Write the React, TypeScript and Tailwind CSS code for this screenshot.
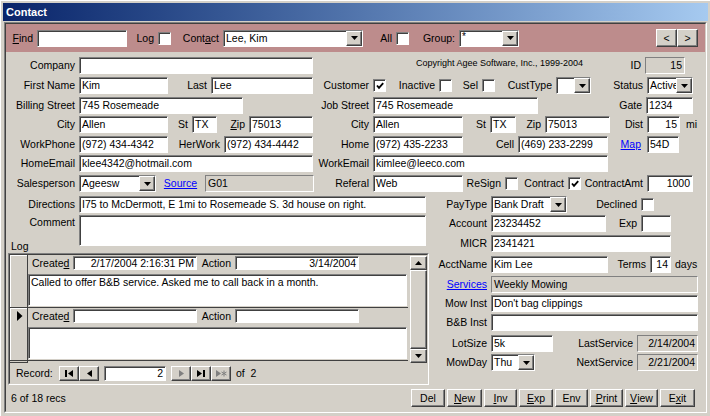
import React from "react";

const sunk =
  "border border-t-[#808080] border-l-[#808080] border-r-white border-b-white shadow-[inset_1px_1px_0_#404040]";
const flat = "border border-t-[#808080] border-l-[#808080] border-r-white border-b-white";
const raised =
  "border border-t-white border-l-white border-r-[#404040] border-b-[#404040] shadow-[inset_-1px_-1px_0_#808080] bg-[#d4d0c8]";

type P = { w: string; children?: React.ReactNode; className?: string };

function Lb({ w, children, className = "" }: P) {
  return <div className={`${w} shrink-0 whitespace-nowrap pr-[4px] text-right ${className}`}>{children}</div>;
}

function Tb({
  w,
  children,
  right,
  grey,
  h = "h-[17px]",
  className = "",
}: P & { right?: boolean; grey?: boolean; h?: string }) {
  return (
    <div
      className={`${w} ${h} flex shrink-0 items-center overflow-hidden whitespace-nowrap pl-[2px] pr-[2px] ${
        grey ? `bg-[#d4d0c8] ${flat}` : `bg-white ${sunk}`
      } ${right ? "justify-end" : ""} ${className}`}
    >
      {children}
    </div>
  );
}

function Down() {
  return (
    <svg width="7" height="4" viewBox="0 0 7 4">
      <path d="M0 0h7L3.5 4z" fill="black" />
    </svg>
  );
}

function Cb({ w, children }: P) {
  return (
    <div className={`${w} flex h-[17px] shrink-0 overflow-hidden bg-white ${sunk}`}>
      <div className="flex flex-1 items-center overflow-hidden whitespace-nowrap pl-[2px]">{children}</div>
      <div className={`flex h-full w-[16px] shrink-0 items-center justify-center ${raised}`}>
        <Down />
      </div>
    </div>
  );
}

function Ck({ on }: { on?: boolean }) {
  return (
    <div className={`flex h-[13px] w-[13px] shrink-0 items-center justify-center bg-white ${sunk}`}>
      {on && (
        <svg width="8" height="8" viewBox="0 0 8 8">
          <path d="M1 3.5 L3 5.8 L7.2 1.2" stroke="black" strokeWidth="1.9" fill="none" />
        </svg>
      )}
    </div>
  );
}

function Btn({ w, children }: P) {
  return <div className={`${w} flex h-[18px] shrink-0 items-center justify-center ${raised}`}>{children}</div>;
}

function Link({ children }: { children: React.ReactNode }) {
  return <span className="text-[#0000ff] underline">{children}</span>;
}

function Row({ children, className = "" }: { children: React.ReactNode; className?: string }) {
  return <div className={`flex h-[17px] items-center ${className}`}>{children}</div>;
}

function Rec({ created, action, memo, current }: { created?: string; action?: string; memo?: string; current?: boolean }) {
  return (
    <div className="flex h-[53px] border-b border-[#404040]">
      <div className="flex w-[18px] shrink-0 justify-center border-r border-[#404040] bg-[#d4d0c8] pt-[3px] pl-[2px] shadow-[inset_1px_1px_0_white]">
        {current && (
          <svg width="6" height="10" viewBox="0 0 6 10">
            <path d="M0 0L5.5 5L0 10z" fill="black" />
          </svg>
        )}
      </div>
      <div className="flex w-[380px] flex-col">
        <div className="mt-[1px] flex h-[14px] items-center">
          <div className="w-[45px] shrink-0 pl-[4px]">
            Create<u>d</u>
          </div>
          <Tb w="w-[124px]" h="h-[14px]" right>
            {created}
          </Tb>
          <Lb w="w-[38px]">Action</Lb>
          <Tb w="w-[124px]" h="h-[14px]" right>
            {action}
          </Tb>
        </div>
        <div className={`mt-[4px] h-[32px] w-[379px] bg-white pl-[2px] pt-[1px] ${sunk}`}>{memo}</div>
      </div>
    </div>
  );
}

function NavBtn({ children }: { children: React.ReactNode }) {
  return <div className={`flex h-[15px] w-[20px] shrink-0 items-center justify-center ${raised}`}>{children}</div>;
}

function SubForm() {
  return (
    <div className="ml-[2px] h-[132px] w-[421px] border border-t-[#808080] border-l-[#808080] border-r-white border-b-white">
      <div className="flex h-full flex-col border border-t-[#404040] border-l-[#404040] border-r-[#d4d0c8] border-b-[#d4d0c8]">
        <div className="flex h-[108px]">
          <div className="flex w-[398px] flex-col">
            <Rec
              created="2/17/2004 2:16:31 PM"
              action="3/14/2004"
              memo="Called to offer B&B service. Asked me to call back in a month."
            />
            <Rec current />
            <div className="flex flex-1">
              <div className="w-[18px] border-r border-b border-[#404040] bg-[#d4d0c8]" />
            </div>
          </div>
          <div className="ml-[2px] flex w-[17px] flex-col pt-[1px]">
            <div className={`flex h-[14px] items-center justify-center ${raised}`}>
              <svg width="7" height="4" viewBox="0 0 7 4">
                <path d="M0 4h7L3.5 0z" fill="black" />
              </svg>
            </div>
            <div className={`flex-1 ${raised}`} />
            <div className={`flex h-[14px] items-center justify-center ${raised}`}>
              <Down />
            </div>
          </div>
        </div>
        <div className="flex h-[20px] items-center">
          <div className="w-[49px] shrink-0 pl-[6px]">Record:</div>
          <NavBtn>
            <svg width="8" height="7" viewBox="0 0 8 7">
              <path d="M0 0h2v7H0zM8 0L3 3.5L8 7z" fill="black" />
            </svg>
          </NavBtn>
          <NavBtn>
            <svg width="5" height="7" viewBox="0 0 5 7">
              <path d="M5 0L0 3.5L5 7z" fill="black" />
            </svg>
          </NavBtn>
          <Tb w="w-[62px]" h="h-[15px]" right className="ml-[5px]">
            2
          </Tb>
          <div className="ml-[5px] flex">
            <NavBtn>
              <svg width="5" height="7" viewBox="0 0 5 7">
                <path d="M0 0L5 3.5L0 7z" fill="#808080" />
              </svg>
            </NavBtn>
            <NavBtn>
              <svg width="8" height="7" viewBox="0 0 8 7">
                <path d="M0 0L5 3.5L0 7zM6 0h2v7H6z" fill="black" />
              </svg>
            </NavBtn>
            <NavBtn>
              <svg width="11" height="7" viewBox="0 0 11 7">
                <path d="M0 0L5 3.5L0 7z" fill="#808080" />
                <path d="M8 0.5v6M5.5 2l5 3M5.5 5l5-3" stroke="#808080" strokeWidth="1" />
              </svg>
            </NavBtn>
          </div>
          <div className="pl-[5px] whitespace-pre">of  2</div>
        </div>
      </div>
    </div>
  );
}

export default function App() {
  return (
    <div className="h-[416px] w-[710px] overflow-hidden border-t border-l border-white bg-[#d4d0c8] pt-[2px] font-['Liberation_Sans',Arial,sans-serif] text-[10.5px] leading-[13px] text-black">
      <div className="mx-[2px] flex h-[18px] items-center bg-linear-to-r from-[#0a246a] to-[#a6caf0] pl-[3px] text-[11px] font-bold text-white">
        Contact
      </div>
      <div className="ml-[3px] mt-[1px] h-[391px] w-[703px] border border-t-[#808080] border-l-[#808080] border-r-white border-b-white">
        <div className="flex h-full flex-col border border-t-[#404040] border-l-[#404040] border-r-[#d4d0c8] border-b-[#d4d0c8]">
          {/* header band */}
          <div className="flex h-[28px] shrink-0 items-center bg-[#bd8c8c]">
            <Lb w="w-[31px]">
              <u>F</u>ind
            </Lb>
            <Tb w="w-[90px]" />
            <Lb w="w-[31px]">Log</Lb>
            <Ck />
            <Lb w="w-[52px]">
              Cont<u>a</u>ct
            </Lb>
            <Cb w="w-[140px]">Lee, Kim</Cb>
            <Lb w="w-[33px]">All</Lb>
            <Ck />
            <Lb w="w-[50px]">Group:</Lb>
            <Cb w="w-[60px]">
              <span className="-mt-[4px] text-[10px]">*</span>
            </Cb>
            <div className="flex-1" />
            <Btn w="w-[21px]">&lt;</Btn>
            <Btn w="w-[21px]">&gt;</Btn>
            <div className="w-[7px]" />
          </div>

          {/* main rows */}
          <Row className="mt-[5px]">
            <Lb w="w-[73px]">Company</Lb>
            <Tb w="w-[234px]" />
            <div className="w-[103px] shrink-0" />
            <div className="-mt-[4px] w-[180px] shrink-0 whitespace-nowrap text-[9px]">
              Copyright Agee Software, Inc., 1999-2004
            </div>
            <Lb w="w-[49px]">ID</Lb>
            <Tb w="w-[40px]" grey right>
              15
            </Tb>
          </Row>
          <Row className="mt-[3px]">
            <Lb w="w-[73px]">First Name</Lb>
            <Tb w="w-[89px]">Kim</Tb>
            <Lb w="w-[43px]">Last</Lb>
            <Tb w="w-[102px]">Lee</Tb>
            <Lb w="w-[60px]">Customer</Lb>
            <Ck on />
            <Lb w="w-[53px]">Inactive</Lb>
            <Ck />
            <Lb w="w-[30px]">Sel</Lb>
            <Ck />
            <Lb w="w-[61px]">CustType</Lb>
            <Cb w="w-[35px]" />
            <Lb w="w-[56px]">Status</Lb>
            <Cb w="w-[46px]">Active</Cb>
          </Row>
          <Row className="mt-[3px]">
            <Lb w="w-[73px]">Billing Street</Lb>
            <Tb w="w-[164px]">745 Rosemeade</Tb>
            <Lb w="w-[130px]">Job Street</Lb>
            <Tb w="w-[165px]">745 Rosemeade</Tb>
            <Lb w="w-[108px]">Gate</Lb>
            <Tb w="w-[47px]">1234</Tb>
          </Row>
          <Row className="mt-[2px]">
            <Lb w="w-[73px]">City</Lb>
            <Tb w="w-[89px]">Allen</Tb>
            <Lb w="w-[24px]">St</Lb>
            <Tb w="w-[25px]">TX</Tb>
            <Lb w="w-[32px]">
              <u>Z</u>ip
            </Lb>
            <Tb w="w-[64px]">75013</Tb>
            <Lb w="w-[60px]">City</Lb>
            <Tb w="w-[90px]">Allen</Tb>
            <Lb w="w-[27px]">St</Lb>
            <Tb w="w-[26px]">TX</Tb>
            <Lb w="w-[29px]">Zip</Lb>
            <Tb w="w-[65px]">75013</Tb>
            <Lb w="w-[37px]">Dist</Lb>
            <Tb w="w-[33px]" right>
              15
            </Tb>
            <div className="pl-[6px]">mi</div>
          </Row>
          <Row className="mt-[3px]">
            <Lb w="w-[73px]">WorkPhone</Lb>
            <Tb w="w-[89px]">(972) 434-4342</Tb>
            <Lb w="w-[56px]">HerWork</Lb>
            <Tb w="w-[89px]">(972) 434-4442</Tb>
            <Lb w="w-[60px]">Home</Lb>
            <Tb w="w-[90px]">(972) 435-2233</Tb>
            <Lb w="w-[55px]">Cell</Lb>
            <Tb w="w-[90px]">(469) 233-2299</Tb>
            <Lb w="w-[39px]" className="pr-[6px]">
              <Link>Map</Link>
            </Lb>
            <Tb w="w-[32px]">54D</Tb>
          </Row>
          <Row className="mt-[2px]">
            <Lb w="w-[73px]">HomeEmail</Lb>
            <Tb w="w-[234px]">klee4342@hotmail.com</Tb>
            <Lb w="w-[60px]">WorkEmail</Lb>
            <Tb w="w-[235px]">kimlee@leeco.com</Tb>
          </Row>
          <Row className="mt-[3px]">
            <Lb w="w-[73px]">Salesperson</Lb>
            <Cb w="w-[77px]">Ageesw</Cb>
            <div className="w-[49px] shrink-0 text-center">
              <Link>Source</Link>
            </div>
            <Tb w="w-[109px]" grey>
              G01
            </Tb>
            <Lb w="w-[59px]">Referal</Lb>
            <Tb w="w-[90px]">Web</Tb>
            <Lb w="w-[42px]">ReSign</Lb>
            <Ck />
            <Lb w="w-[50px]">Contract</Lb>
            <Ck on />
            <Lb w="w-[66px]">ContractAmt</Lb>
            <Tb w="w-[46px]" right>
              1000
            </Tb>
          </Row>

          {/* two columns */}
          <div className="mt-[4px] flex h-[189px]">
            <div className="flex w-[424px] shrink-0 flex-col">
              <Row>
                <Lb w="w-[73px]">Directions</Lb>
                <Tb w="w-[347px]">I75 to McDermott, E 1mi to Rosemeade S. 3d house on right.</Tb>
              </Row>
              <div className="mt-[2px] flex h-[31px]">
                <Lb w="w-[73px]" className="pt-[1px]">
                  Comment
                </Lb>
                <Tb w="w-[347px]" h="h-[31px]" />
              </div>
              <div className="-mt-[7px] h-[14px] pl-[5px] leading-[14px]">Log</div>
              <SubForm />
            </div>
            <div className="flex flex-1 flex-col">
              <Row>
                <Lb w="w-[61px]">PayType</Lb>
                <Cb w="w-[76px]">Bank Draft</Cb>
                <Lb w="w-[74px]">Declined</Lb>
                <Ck />
              </Row>
              <Row className="mt-[2px]">
                <Lb w="w-[61px]">Account</Lb>
                <Tb w="w-[115px]">23234452</Tb>
                <Lb w="w-[35px]">Exp</Lb>
                <Tb w="w-[30px]" />
              </Row>
              <Row className="mt-[3px]">
                <Lb w="w-[61px]">MICR</Lb>
                <Tb w="w-[180px]">2341421</Tb>
              </Row>
              <Row className="mt-[4px]">
                <Lb w="w-[61px]">AcctName</Lb>
                <Tb w="w-[117px]">Kim Lee</Tb>
                <Lb w="w-[42px]">Terms</Lb>
                <Tb w="w-[21px]" right>
                  14
                </Tb>
                <div className="pl-[4px]">days</div>
              </Row>
              <Row className="mt-[3px]">
                <Lb w="w-[61px]">
                  <Link>Services</Link>
                </Lb>
                <Tb w="w-[207px]" grey>
                  Weekly Mowing
                </Tb>
              </Row>
              <Row className="mt-[2px]">
                <Lb w="w-[61px]">Mow Inst</Lb>
                <Tb w="w-[207px]">Don't bag clippings</Tb>
              </Row>
              <Row className="mt-[2px]">
                <Lb w="w-[61px]">B&amp;B Inst</Lb>
                <Tb w="w-[207px]" />
              </Row>
              <Row className="mt-[4px]">
                <Lb w="w-[61px]">LotSize</Lb>
                <Tb w="w-[62px]">5k</Tb>
                <Lb w="w-[84px]">LastService</Lb>
                <Tb w="w-[61px]" grey right>
                  2/14/2004
                </Tb>
              </Row>
              <Row className="mt-[2px]">
                <Lb w="w-[61px]">MowDay</Lb>
                <Cb w="w-[44px]">Thu</Cb>
                <Lb w="w-[102px]">NextService</Lb>
                <Tb w="w-[61px]" grey right>
                  2/21/2004
                </Tb>
              </Row>
            </div>
          </div>

          {/* footer */}
          <div className="flex h-[26px] items-center">
            <div className="w-[405px] shrink-0 pl-[5px]">6 of 18 recs</div>
            <div className="flex gap-[2px]">
              <Btn w="w-[34px]">Del</Btn>
              <Btn w="w-[35px]">
                <u>N</u>ew
              </Btn>
              <Btn w="w-[33px]">
                <u>I</u>nv
              </Btn>
              <Btn w="w-[34px]">
                <u>E</u>xp
              </Btn>
              <Btn w="w-[33px]">Env</Btn>
              <Btn w="w-[33px]">
                <u>P</u>rint
              </Btn>
              <Btn w="w-[33px]">
                <u>V</u>iew
              </Btn>
              <Btn w="w-[35px]">
                E<u>x</u>it
              </Btn>
            </div>
          </div>
        </div>
      </div>
    </div>
  );
}
